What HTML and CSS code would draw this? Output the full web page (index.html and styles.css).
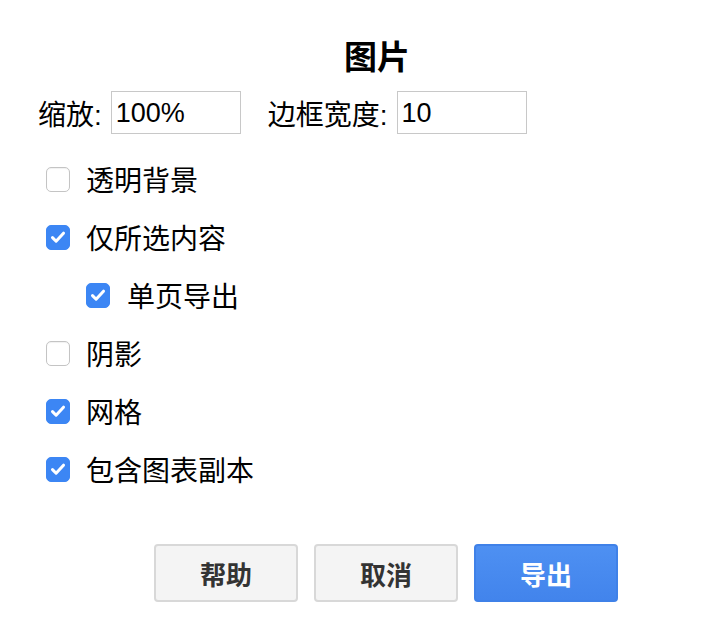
FILE: index.html
```html
<!DOCTYPE html>
<html lang="zh-CN">
<head>
<meta charset="utf-8">
<title>图片</title>
<link rel="stylesheet" href="styles.css">
</head>
<body>
<div class="dialog">
  <div class="title">图片</div>
  <div class="fields">
    <label class="field">缩放:<span class="input">100%</span></label>
    <label class="field">边框宽度:<span class="input">10</span></label>
  </div>
  <div class="options">
    <div class="opt"><span class="box"></span><span class="lbl">透明背景</span></div>
    <div class="opt"><span class="box on"><svg viewBox="0 0 24 24"><path d="M6.5 12.6l3.6 3.6L17.5 8.2"/></svg></span><span class="lbl">仅所选内容</span></div>
    <div class="opt nested"><span class="box on"><svg viewBox="0 0 24 24"><path d="M6.5 12.6l3.6 3.6L17.5 8.2"/></svg></span><span class="lbl">单页导出</span></div>
    <div class="opt"><span class="box"></span><span class="lbl">阴影</span></div>
    <div class="opt"><span class="box on"><svg viewBox="0 0 24 24"><path d="M6.5 12.6l3.6 3.6L17.5 8.2"/></svg></span><span class="lbl">网格</span></div>
    <div class="opt"><span class="box on"><svg viewBox="0 0 24 24"><path d="M6.5 12.6l3.6 3.6L17.5 8.2"/></svg></span><span class="lbl">包含图表副本</span></div>
  </div>
  <div class="buttons">
    <button class="btn">帮助</button>
    <button class="btn">取消</button>
    <button class="btn primary">导出</button>
  </div>
</div>
</body>
</html>
```
FILE: styles.css
```css
html, body {
  margin: 0;
  background: #fff;
}
body {
  font-family: "Liberation Sans", "Noto Sans CJK SC", sans-serif;
  font-size: 28px;
  color: #000;
}
.dialog {
  width: 682px;
  margin-left: 36px;
  padding-top: 34px;
}
.title {
  text-align: center;
  font-family: "Noto Sans CJK SC", sans-serif;
  font-weight: bold;
  font-size: 33px;
  line-height: 42px;
}
.fields {
  display: flex;
  gap: 27px;
  margin-top: 15px;
  padding-left: 2px;
}
.field {
  display: flex;
  align-items: center;
  gap: 9px;
}
.input {
  display: inline-block;
  width: 124px;
  height: 41px;
  line-height: 42px;
  border: 1px solid #c8c8c8;
  padding-left: 4px;
  font-family: "Liberation Sans", sans-serif;
  font-size: 27px;
}
.options {
  margin-top: 16px;
  padding-left: 10px;
}
.opt {
  display: flex;
  align-items: center;
  gap: 16px;
  height: 58px;
}
.opt.nested {
  padding-left: 40px;
  gap: 17px;
}
.box {
  width: 22px;
  height: 23px;
  border: 1px solid #c4c4c4;
  border-radius: 5px;
  background: #fff;
  box-shadow: inset 0 1px 1px rgba(0,0,0,0.06);
  display: flex;
  align-items: center;
  justify-content: center;
}
.box.on {
  background: #3c86f4;
  border-color: #3c86f4;
  box-shadow: none;
}
.box svg {
  width: 24px;
  height: 24px;
  flex: none;
}
.box svg path {
  fill: none;
  stroke: #fff;
  stroke-width: 3;
  stroke-linecap: round;
  stroke-linejoin: round;
}
.lbl {
  font-family: "Noto Sans CJK SC", sans-serif;
  line-height: 34px;
}
.buttons {
  display: flex;
  gap: 16px;
  justify-content: flex-end;
  margin-top: 46px;
  margin-right: 100px;
}
.btn {
  width: 144px;
  height: 58px;
  border: 2px solid #d8d8d8;
  border-radius: 4px;
  background: #f4f4f4;
  color: #333;
  font-family: "Noto Sans CJK SC", sans-serif;
  font-weight: bold;
  font-size: 26px;
  padding: 0;
}
.btn.primary {
  background: linear-gradient(#4e90f2, #4284ec);
  border-color: #3f81e8;
  color: #fff;
}
```
